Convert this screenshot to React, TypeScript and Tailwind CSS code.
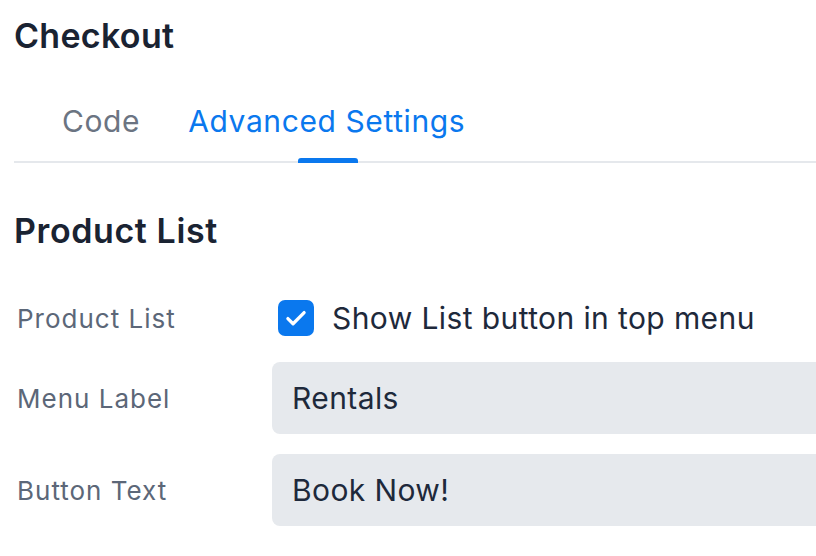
import React from 'react';

export default function App() {
  return (
    <div className="w-[816px] h-[556px] overflow-hidden bg-white font-['Inter',sans-serif] text-[#1e293b]">
      <div className="pl-[14px]">
        <h1 className="pt-[14px] text-[34px] leading-[44px] font-semibold tracking-[0.3px] text-[#1a2332]">Checkout</h1>

        {/* tabs */}
        <div className="mt-[43px] flex border-b-2 border-[#e5e8ec]">
          <div className="px-[48px] pb-[20px] text-[30px] leading-[40px] tracking-[0.6px] text-[#6b7482]">Code</div>
          <div className="relative pb-[20px] text-[30px] leading-[40px] tracking-[0.6px] text-[#0a78ee]">
            Advanced Settings
            <span className="absolute left-[110px] bottom-[-2px] w-[60px] h-[5px] rounded-t-[3px] bg-[#0a78ee]" />
          </div>
        </div>

        <h2 className="mt-[46px] text-[34px] leading-[44px] font-semibold tracking-[0.6px] text-[#1a2332]">Product List</h2>

        <div className="mt-[41px] flex flex-col">
          <div className="flex items-center h-[48px]">
            <div className="w-[258px] pl-[3px] text-[26px] tracking-[1px] text-[#5c6778]">Product List</div>
            <div className="ml-[6px] flex items-center gap-[18px]">
              <span className="w-[36px] h-[36px] rounded-[7px] bg-[#0a78ee] flex items-center justify-center">
                <svg width="26" height="26" viewBox="0 0 24 24" fill="none" stroke="white" strokeWidth="3" strokeLinecap="round" strokeLinejoin="round">
                  <path d="M4.5 12.5l4.8 4.8L19.5 7" />
                </svg>
              </span>
              <span className="text-[30px] tracking-[0.4px] text-[#1e293b]">Show List button in top menu</span>
            </div>
          </div>

          <div className="mt-[20px] flex items-center">
            <div className="w-[258px] pl-[3px] text-[26px] tracking-[1px] text-[#5c6778]">Menu Label</div>
            <div className="flex-1 h-[72px] rounded-l-[8px] bg-[#e6e9ed] flex items-center pl-[20px] text-[30px] tracking-[0.4px] text-[#1e293b]">Rentals</div>
          </div>

          <div className="mt-[20px] flex items-center">
            <div className="w-[258px] pl-[3px] text-[26px] tracking-[1px] text-[#5c6778]">Button Text</div>
            <div className="flex-1 h-[72px] rounded-l-[8px] bg-[#e6e9ed] flex items-center pl-[20px] text-[30px] tracking-[0.4px] text-[#1e293b]">Book Now!</div>
          </div>
        </div>
      </div>
    </div>
  );
}
